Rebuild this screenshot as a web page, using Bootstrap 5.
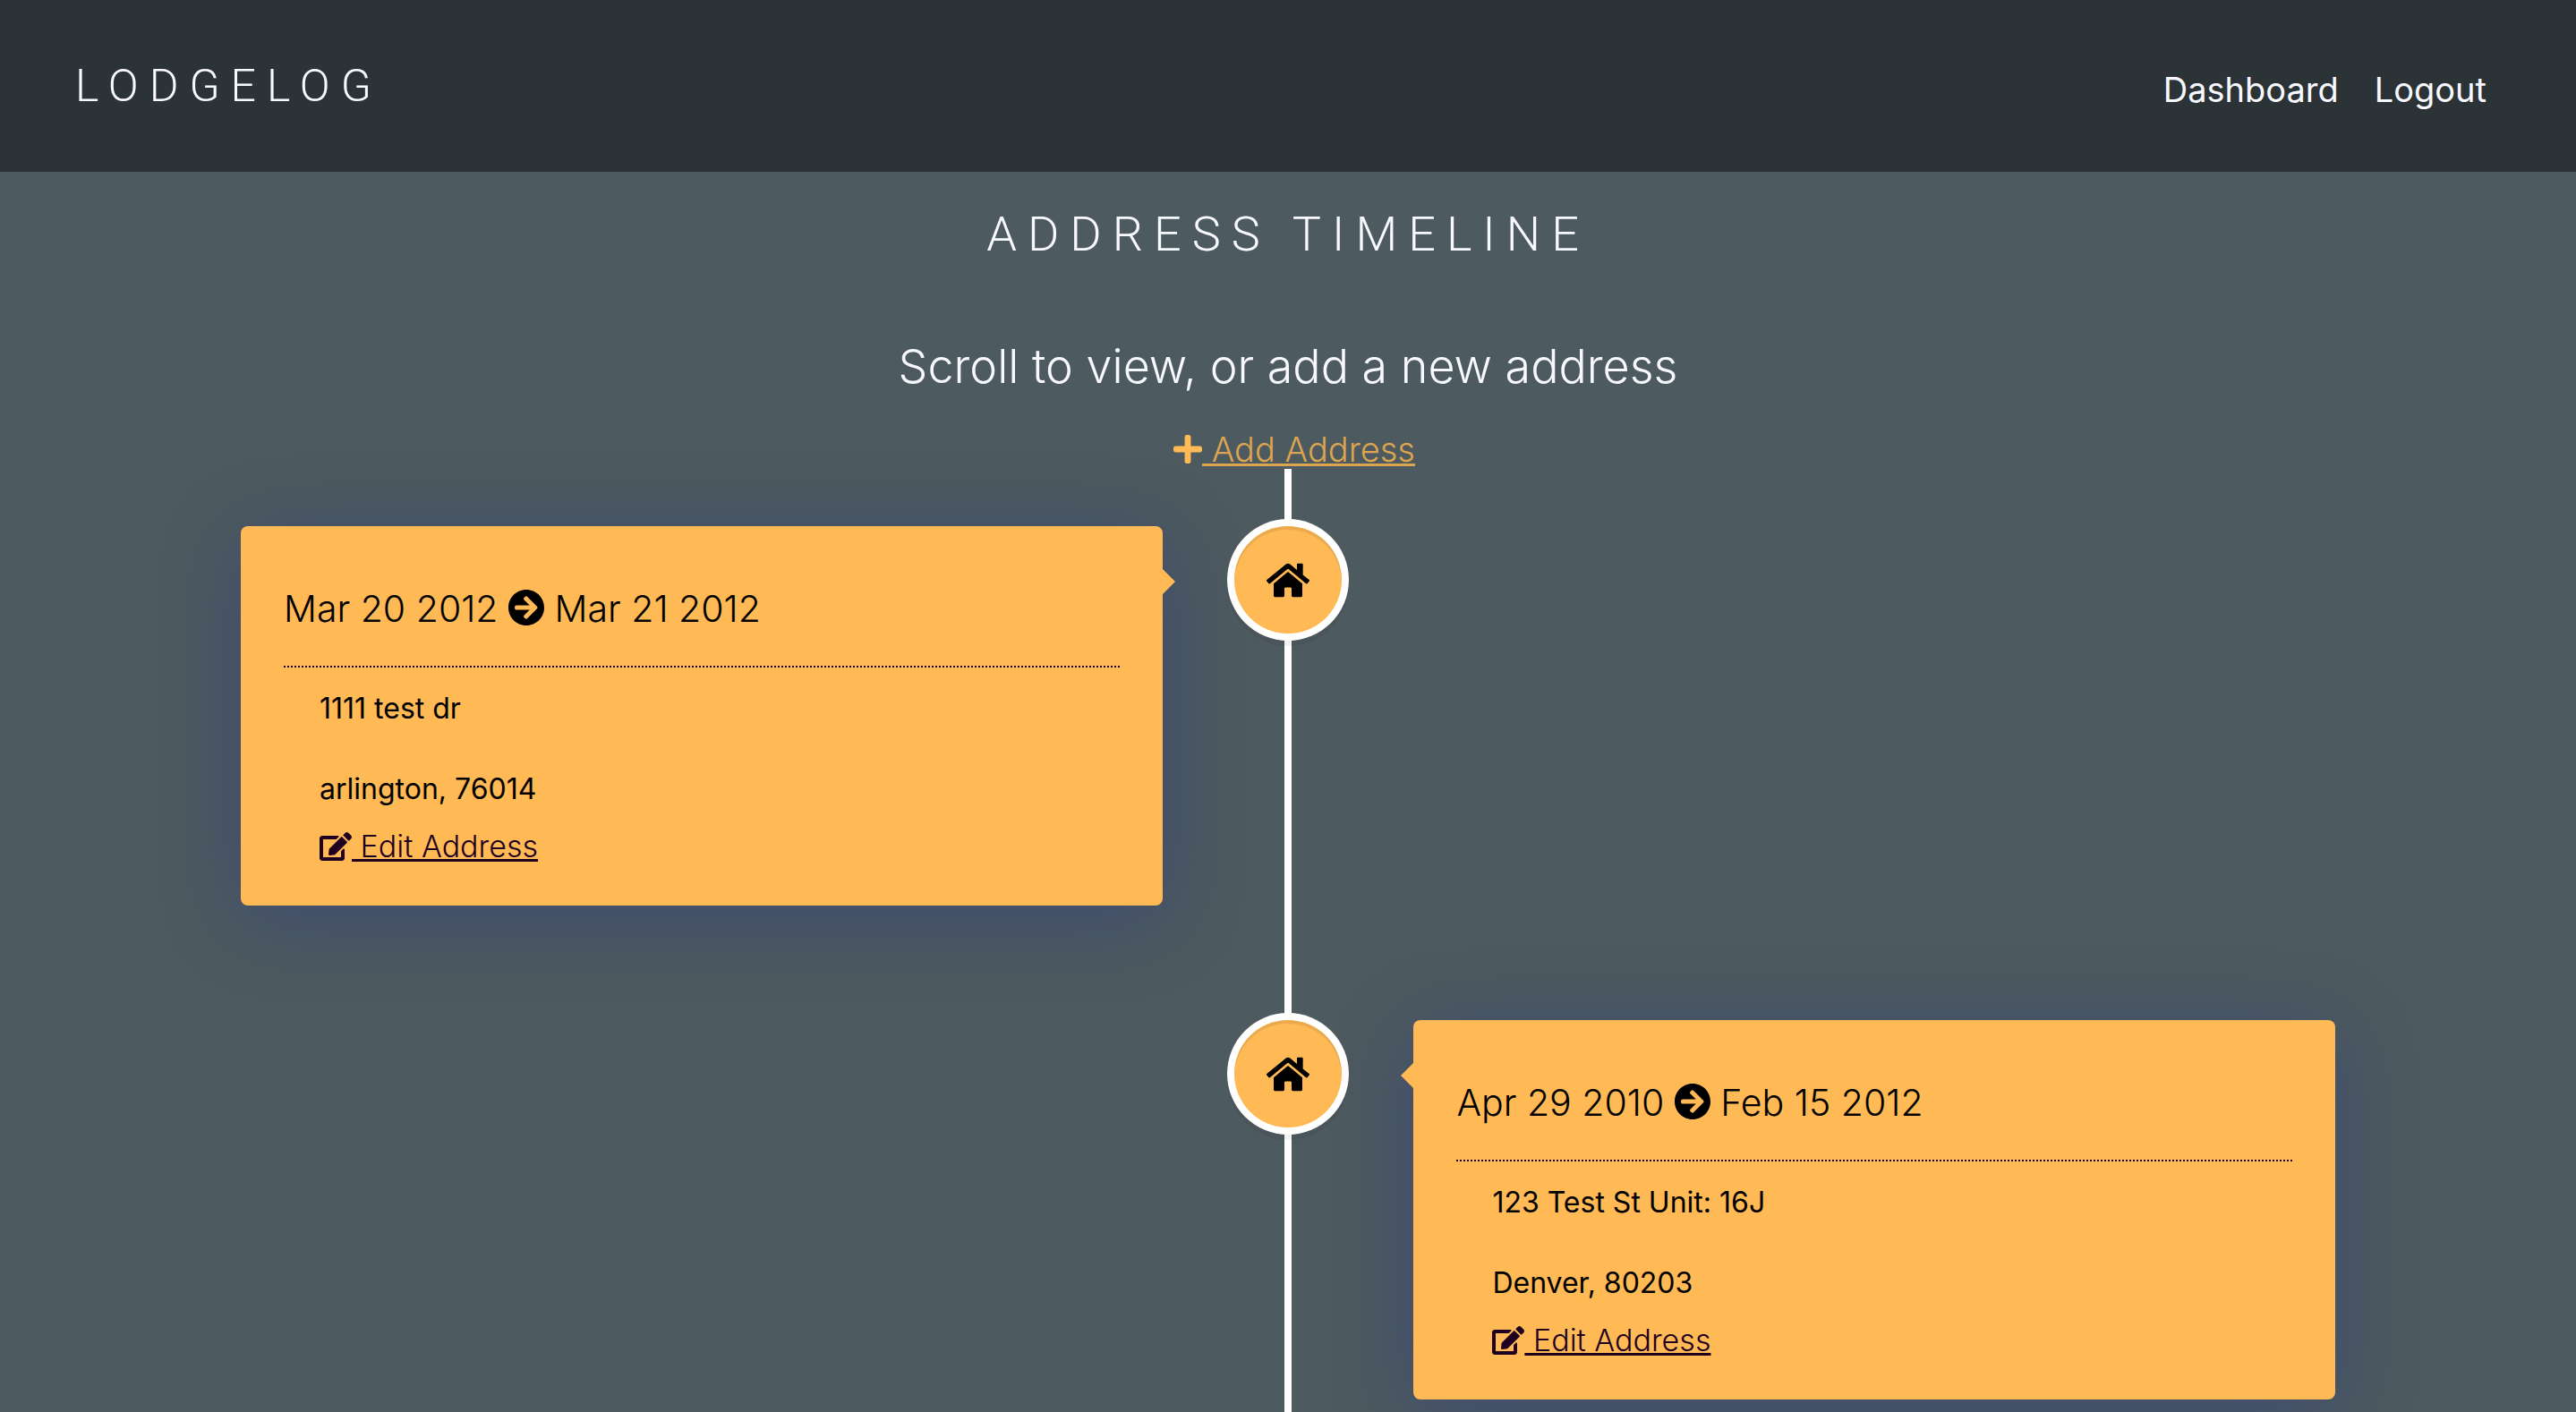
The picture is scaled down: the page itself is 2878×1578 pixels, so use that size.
<!DOCTYPE html>
<html lang="en">
<head>
<meta charset="utf-8">
<meta name="viewport" content="width=device-width, initial-scale=1">
<title>LodgeLog - Address Timeline</title>
<link href="https://cdn.jsdelivr.net/npm/bootstrap@5.3.0/dist/css/bootstrap.min.css" rel="stylesheet">
<style>
  :root { --slate: #4d5a5f; --ink: #200020; --amber: #ffb955; --ghost: #f8f8ff; }
  body { background: var(--slate); color: #000; font-family: Inter, sans-serif; }
  .site-nav { background: #2c3336; height: 192px; padding: 0 80px 0 84px; }
  .display-face { font-family: Roboto, sans-serif; font-weight: 300; color: var(--ghost); line-height: 60px; letter-spacing: 12px; }
  .brand-text { font-size: 50px; }
  .page-title { font-size: 54px; margin: 40px 0 0; }
  .site-links a { color: var(--ghost); font-size: 38px; line-height: 48px; padding: 0 20px; }
  .alt-face { font-weight: 300; }
  .intro { color: var(--ghost); font-size: 52px; line-height: 60px; margin: 88px 0 40px; }
  .add-link { color: #dca54f; font-size: 38px; line-height: 44px; margin-left: 14px; }
  .add-link svg { fill: var(--amber); width: 32px; height: 32px; vertical-align: -2px; }
  .timeline { max-width: 2340px; padding-top: 64px; }
  .timeline::before { content: ""; position: absolute; top: 0; bottom: 0; left: 50%; width: 8px; margin-left: -4px; background: #fff; }
  .timeline-item { display: grid; grid-template-columns: 44% 12% 44%; align-items: start; margin-bottom: 128px; }
  .timeline-item:last-child { margin-bottom: 12px; }
  .marker { width: 120px; height: 120px; grid-column: 2; grid-row: 1; background: var(--amber);
    box-shadow: 0 0 0 8px #fff, inset 0 4px 0 rgba(0,0,0,.08), 0 6px 0 8px rgba(0,0,0,.05); }
  .marker svg { width: 48px; height: 43px; }
  .stay { grid-row: 1; background: var(--amber); border-radius: 8px; padding: 62px 48px 42px;
    box-shadow: 0 14px 90px rgba(20,26,167,.25); }
  .stay::before { content: ""; position: absolute; top: 48px; border: 14px solid transparent; }
  .stay-left { grid-column: 1; }
  .stay-left::before { left: 100%; border-left-color: var(--amber); }
  .stay-right { grid-column: 3; }
  .stay-right::before { right: 100%; border-right-color: var(--amber); }
  .stay-dates { font-size: 41px; line-height: 60px; padding-bottom: 34px; border-bottom: 2px dotted var(--ink); }
  .stay-dates svg { width: 40px; height: 40px; vertical-align: -4px; }
  .stay-body { font-size: 32px; line-height: 48px; padding: 22px 40px 0; }
  .stay-street { margin-bottom: 42px; }
  .stay-body a { color: var(--ink); font-size: 34px; }
  .stay-body svg { width: 36px; height: 32px; vertical-align: -4px; fill: var(--ink); }
</style>
</head>
<body class="d-flex flex-column min-vh-100">
<svg class="d-none" aria-hidden="true">
  <symbol id="i-home" viewBox="0 0 576 512"><path d="M280.37 148.26L96 300.11V464a16 16 0 0 0 16 16l112.06-.29a16 16 0 0 0 15.92-16V368a16 16 0 0 1 16-16h64a16 16 0 0 1 16 16v95.64a16 16 0 0 0 16 16.05L464 480a16 16 0 0 0 16-16V300L295.67 148.26a12.19 12.19 0 0 0-15.3 0zM571.6 251.47L488 182.56V44.05a12 12 0 0 0-12-12h-56a12 12 0 0 0-12 12v72.61L318.47 43a48 48 0 0 0-61 0L4.34 251.47a12 12 0 0 0-1.6 16.9l25.5 31A12 12 0 0 0 45.15 301l235.22-193.74a12.19 12.19 0 0 1 15.3 0L530.9 301a12 12 0 0 0 16.9-1.6l25.5-31a12 12 0 0 0-1.7-16.93z"/></symbol>
  <symbol id="i-edit" viewBox="0 0 576 512"><path d="M402.6 83.2l90.2 90.2c3.8 3.8 3.8 10 0 13.8L274.4 405.6l-92.8 10.3c-12.4 1.4-22.9-9.1-21.5-21.5l10.3-92.8L388.8 83.2c3.8-3.8 10-3.8 13.8 0zm162-22.9l-48.8-48.8c-15.2-15.2-39.9-15.2-55.2 0l-35.4 35.4c-3.8 3.8-3.8 10 0 13.8l90.2 90.2c3.8 3.8 10 3.8 13.8 0l35.4-35.4c15.2-15.3 15.2-40 0-55.2zM384 346.2V448H64V128h229.8c3.2 0 6.2-1.3 8.5-3.5l40-40c7.6-7.6 2.2-20.5-8.5-20.5H48C21.5 64 0 85.5 0 112v352c0 26.5 21.5 48 48 48h352c26.5 0 48-21.5 48-48V306.2c0-10.7-12.9-16-20.5-8.5l-40 40c-2.2 2.3-3.5 5.3-3.5 8.5z"/></symbol>
  <symbol id="i-arrow" viewBox="8 8 496 496"><path d="M256 8c137 0 248 111 248 248S393 504 256 504 8 393 8 256 119 8 256 8zm-28.9 143.6l75.5 72.4H120c-13.3 0-24 10.7-24 24v16c0 13.3 10.7 24 24 24h182.6l-75.5 72.4c-9.7 9.3-9.9 24.8-.4 34.3l11 10.9c9.4 9.4 24.6 9.4 33.9 0L404.3 273c9.4-9.4 9.4-24.6 0-33.9L271.6 106.3c-9.4-9.4-24.6-9.4-33.9 0l-11 10.9c-9.5 9.6-9.3 25.1.4 34.4z"/></symbol>
  <symbol id="i-plus" viewBox="0 32 448 448"><path d="M416 208H272V64c0-17.67-14.33-32-32-32h-32c-17.67 0-32 14.33-32 32v144H32c-17.67 0-32 14.33-32 32v32c0 17.67 14.33 32 32 32h144v144c0 17.67 14.33 32 32 32h32c17.67 0 32-14.33 32-32V304h144c17.67 0 32-14.33 32-32v-32c0-17.67-14.33-32-32-32z"/></symbol>
</svg>

<nav class="site-nav d-flex align-items-center justify-content-between">
  <a class="display-face brand-text text-decoration-none" href="#">LODGELOG</a>
  <ul class="site-links list-unstyled d-flex mb-0 pt-2">
    <li><a class="text-decoration-none" href="#">Dashboard</a></li>
    <li><a class="text-decoration-none" href="#">Logout</a></li>
  </ul>
</nav>

<main class="d-flex flex-column flex-grow-1">
  <header class="text-center d-flex flex-column align-items-center">
    <h1 class="display-face page-title">ADDRESS TIMELINE</h1>
    <p class="alt-face intro">Scroll to view, or add a new address</p>
    <a class="add-link alt-face" href="#"><svg aria-hidden="true"><use href="#i-plus"/></svg> Add Address</a>
  </header>

  <div class="timeline position-relative container-fluid px-0 flex-grow-1">
    <div class="timeline-item">
      <div class="marker position-relative rounded-circle d-flex align-items-center justify-content-center mx-auto"><svg aria-hidden="true"><use href="#i-home"/></svg></div>
      <article class="stay stay-left position-relative">
        <h2 class="stay-dates alt-face mb-0">Mar 20 2012 <svg aria-hidden="true"><use href="#i-arrow"/></svg> Mar 21 2012</h2>
        <div class="stay-body">
          <p class="stay-street">1111 test dr</p>
          <p class="mb-3">arlington, 76014</p>
          <a class="alt-face d-block" href="#"><svg aria-hidden="true"><use href="#i-edit"/></svg> Edit Address</a>
        </div>
      </article>
    </div>
    <div class="timeline-item">
      <div class="marker position-relative rounded-circle d-flex align-items-center justify-content-center mx-auto"><svg aria-hidden="true"><use href="#i-home"/></svg></div>
      <article class="stay stay-right position-relative">
        <h2 class="stay-dates alt-face mb-0">Apr 29 2010 <svg aria-hidden="true"><use href="#i-arrow"/></svg> Feb 15 2012</h2>
        <div class="stay-body">
          <p class="stay-street">123 Test St Unit: 16J</p>
          <p class="mb-3">Denver, 80203</p>
          <a class="alt-face d-block" href="#"><svg aria-hidden="true"><use href="#i-edit"/></svg> Edit Address</a>
        </div>
      </article>
    </div>
  </div>
</main>
<script src="https://cdn.jsdelivr.net/npm/bootstrap@5.3.0/dist/js/bootstrap.bundle.min.js"></script>
</body>
</html>
